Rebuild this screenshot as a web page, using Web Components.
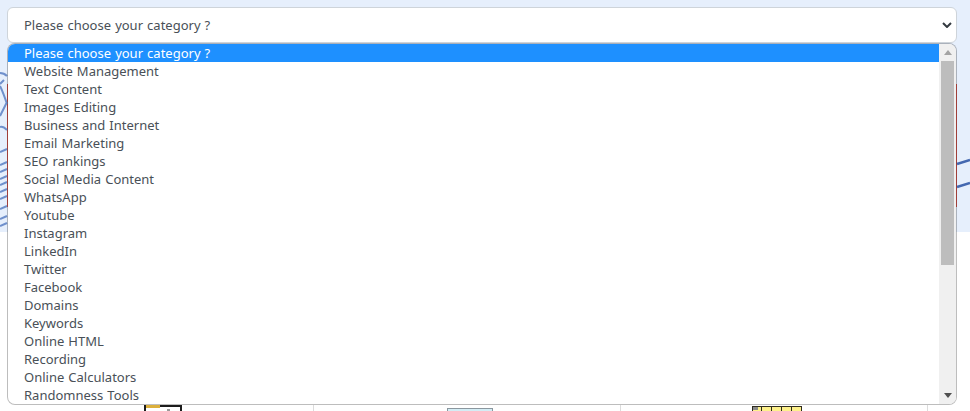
<!DOCTYPE html>
<html>
<head>
<meta charset="utf-8">
<style>
  html, body { margin: 0; height: 100%; }
  body { width: 970px; height: 411px; overflow: hidden; font-family: "Noto Sans", sans-serif; }
</style>
</head>
<body>
<page-backdrop>
  <category-select label="Please choose your category ?"></category-select>
  <category-list></category-list>
</page-backdrop>

<script>
const CATEGORIES = [
  'Please choose your category ?',
  'Website Management',
  'Text Content',
  'Images Editing',
  'Business and Internet',
  'Email Marketing',
  'SEO rankings',
  'Social Media Content',
  'WhatsApp',
  'Youtube',
  'Instagram',
  'LinkedIn',
  'Twitter',
  'Facebook',
  'Domains',
  'Keywords',
  'Online HTML',
  'Recording',
  'Online Calculators',
  'Randomness Tools',
];

class PageBackdrop extends HTMLElement {
  constructor() {
    super();
    this.attachShadow({ mode: 'open' });
    this.shadowRoot.innerHTML = `
      <style>
        :host {
          display: block;
          position: relative;
          width: 970px;
          height: 411px;
          background: #fff;
          overflow: hidden;
        }
        .hero {
          position: absolute;
          inset: 0 0 auto 0;
          height: 232px;
          background: #e6effc;
        }
        .art { position: absolute; left: 0; top: 0; }
        .divider { position: absolute; top: 405px; width: 1px; height: 6px; background: #dcdcdc; }
        .content {
          position: relative;
          display: flex;
          flex-direction: column;
          padding: 7px 13px 0 7px;
        }
      </style>
      <div class="hero"></div>
      <svg class="art" width="970" height="411" viewBox="0 0 970 411" fill="none">
        <rect x="7" y="84" width="950" height="123" fill="#d8564e"/>
        <g stroke="#6f90cc" stroke-width="2">
          <path d="M0 73C3 73 5 74 7 76M0 84L4 80M0 86C3 92 5 98 7 104M0 116C3 110 5 106 7 102M0 127C3 126 5 128 7 130"/>
          <path d="M0 152L7 149M0 165L7 162M0 172L7 169M0 179L7 176M0 185L7 182M0 192L7 189M0 199L7 196M0 209L7 206M0 219L7 216M0 226L7 223"/>
        </g>
        <path d="M957 164L970 160M957 187L970 183" stroke="#4468b0" stroke-width="2.500"/>
        <rect x="145" y="406" width="36" height="7" fill="#fff" stroke="#1c1c1c" stroke-width="2"/>
        <rect x="146" y="405" width="14" height="3" fill="#dcb03c"/>
        <rect x="167" y="409" width="3" height="2" fill="#9a9a9a"/>
        <rect x="447.500" y="408.500" width="45" height="4" fill="#d4edf5" stroke="#8b979f"/>
        <rect x="752" y="406" width="50" height="5" fill="#fdf08a"/>
        <path d="M752 406.500H802M761.500 406V411M771.500 406V411M781.500 406V411M791.500 406V411M752.500 406V411M801.500 406V411" stroke="#2e2a1e"/>
        <rect x="753" y="407" width="5" height="3" fill="#8a8a8a"/>
      </svg>
      <div class="divider" style="left:313px"></div>
      <div class="divider" style="left:620px"></div>
      <div class="divider" style="left:927px"></div>
      <div class="content"><slot></slot></div>
    `;
  }
}

class CategorySelect extends HTMLElement {
  constructor() {
    super();
    this.attachShadow({ mode: 'open' });
  }

  connectedCallback() {
    this.shadowRoot.innerHTML = `
      <style>
        :host {
          display: flex;
          align-items: center;
          justify-content: space-between;
          box-sizing: border-box;
          height: 36px;
          padding: 0 4px 0 16px;
          background: #fff;
          border: 1px solid #ced4da;
          border-radius: 6px;
          color: #495057;
          font-size: 13px;
          word-spacing: 0.7px;
        }
      </style>
      <span>${this.getAttribute('label')}</span>
      <svg width="10" height="6" viewBox="0 0 10 6" fill="none">
        <path d="M1 1L5 5L9 1" stroke="#343a40" stroke-width="2"/>
      </svg>
    `;
  }
}

class CategoryList extends HTMLElement {
  constructor() {
    super();
    this.attachShadow({ mode: 'open' });
  }

  connectedCallback() {
    const rows = CATEGORIES.map(
      (name, index) => `<div class="row${index === 0 ? ' selected' : ''}">${name}</div>`,
    ).join('');
    this.shadowRoot.innerHTML = `
      <style>
        :host {
          display: flex;
          box-sizing: border-box;
          height: 362px;
          background: #fff;
          background-clip: padding-box;
          border: 1px solid rgba(0, 0, 0, 0.26);
          border-radius: 8px;
          color: #495057;
          font-size: 13px;
          word-spacing: 0.7px;
        }
        .rows { flex: 1; min-width: 0; overflow: hidden; border-radius: 7px 0 0 7px; }
        .row { height: 18px; line-height: 18px; padding-left: 16px; white-space: nowrap; }
        .selected { background: #1e90ff; color: #fff; }
        .track {
          display: flex;
          flex-direction: column;
          flex: none;
          width: 17px;
          background: #f0f0f0;
          border-radius: 0 7px 7px 0;
        }
        .arrow { display: flex; align-items: center; justify-content: center; height: 17px; flex: none; }
        .thumb { height: 204px; margin: 0 2px; background: #bdbdbd; flex: none; }
        .spacer { flex: 1; }
      </style>
      <div class="rows">${rows}</div>
      <div class="track">
        <div class="arrow"><svg width="8" height="5"><path d="M0 5L4 0L8 5Z" fill="#a3a3a3"/></svg></div>
        <div class="thumb"></div>
        <div class="spacer"></div>
        <div class="arrow"><svg width="8" height="5"><path d="M0 0L8 0L4 5Z" fill="#505050"/></svg></div>
      </div>
    `;
  }
}

customElements.define('page-backdrop', PageBackdrop);
customElements.define('category-select', CategorySelect);
customElements.define('category-list', CategoryList);
</script>
</body>
</html>
